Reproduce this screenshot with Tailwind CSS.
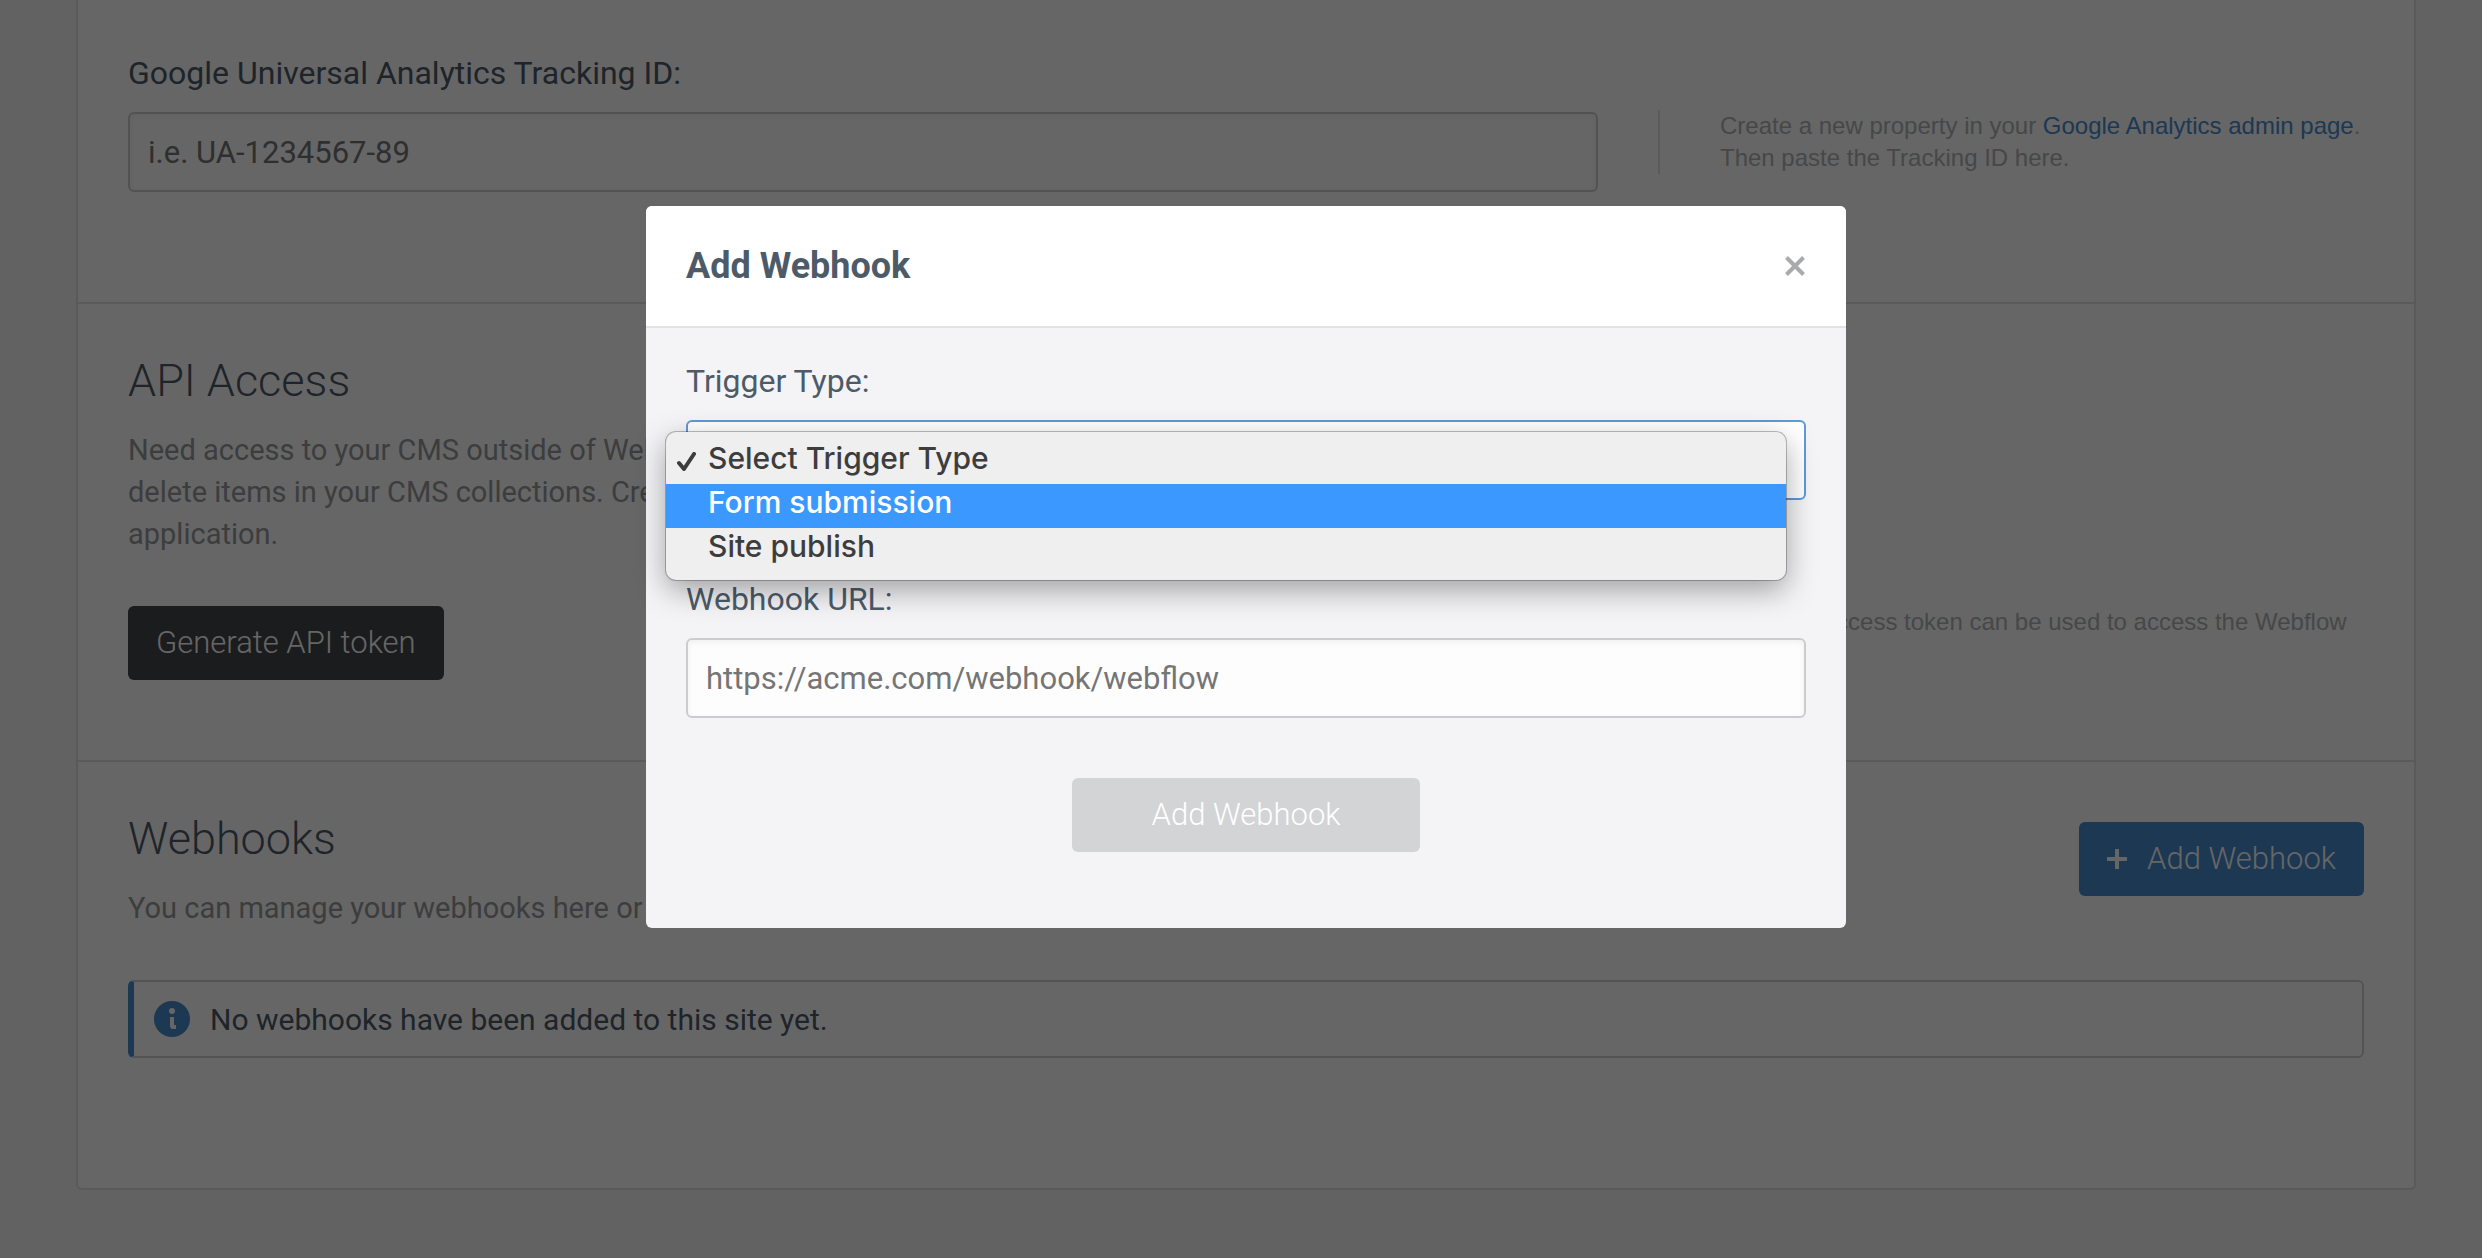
<!DOCTYPE html>
<html lang="en">
<head>
    <meta charset="UTF-8">
    <meta name="viewport" content="width=device-width, initial-scale=1.0">
    <title>Site Settings - Integrations</title>
    <script src="https://cdn.jsdelivr.net/npm/@tailwindcss/browser@4"></script>
</head>
<body class="relative min-h-screen bg-[#f4f4f4] pl-[76px] pr-[66px] pb-16 font-['Roboto',sans-serif] text-[#4d5b69]">

    <main class="rounded-b-md border-2 border-t-0 border-[#e1e1e1] bg-white">

        <!-- Google Analytics -->
        <section class="grid grid-cols-[1fr_706px] gap-x-[60px] border-b-2 border-[#e1e1e1] px-[50px] pt-[54px] pb-[110px]">
            <div>
                <label for="tracking-id" class="mb-5 block text-[32px] leading-[38px]">Google Universal Analytics Tracking ID:</label>
                <input id="tracking-id" type="text" placeholder="i.e. UA-1234567-89"
                       class="block h-20 w-full rounded-md border-2 border-[#cdcdcd] bg-white px-[18px] text-[31px] shadow-[inset_0_2px_6px_rgba(0,0,0,0.06)] placeholder:text-[#757575]">
            </div>
            <aside class="mt-14 self-start border-l-2 border-[#e1e1e1] pl-[60px] font-['Liberation_Sans',sans-serif] text-2xl leading-8 text-[#b0b3b5]">
                Create a new property in your <a href="#" class="text-[#488cd0]">Google Analytics admin page</a>.<br>
                Then paste the Tracking ID here.
            </aside>
        </section>

        <!-- API access -->
        <section class="border-b-2 border-[#e1e1e1] px-[50px] pt-[50px] pb-20">
            <h2 class="text-[45px] leading-[54px] font-light">API Access</h2>
            <p class="mt-[21px] text-[29px] leading-[42px] text-[#979a9b]">
                Need access to your CMS outside of Webflow? Use the Webflow API to create, read, update and<br>
                delete items in your CMS collections. Create an API token to authorize your<br>
                application.
            </p>
            <div class="mt-[51px] grid grid-cols-[1fr_706px] gap-x-[60px]">
                <div>
                    <button type="button" class="h-[74px] rounded-md bg-[#444649] px-7 text-[31px] font-light text-white">Generate API token</button>
                </div>
                <aside class="self-start border-l-2 border-[#e1e1e1] pl-[60px] font-['Liberation_Sans',sans-serif] text-2xl leading-8 text-[#b0b3b5]">
                    Only one access token can be used to access the Webflow<br>
                    API.
                </aside>
            </div>
        </section>

        <!-- Webhooks -->
        <section class="px-[50px] pt-[50px] pb-[130px]">
            <div class="flex items-start justify-between">
                <div>
                    <h2 class="text-[45px] leading-[54px] font-light">Webhooks</h2>
                    <p class="mt-[21px] text-[29px] leading-[42px] text-[#979a9b]">You can manage your webhooks here or via the API.</p>
                </div>
                <button type="button" class="mt-[10px] flex h-[74px] items-center gap-5 rounded-md bg-[#488cd0] px-7 text-[31px] font-light text-white">
                    <svg class="size-5" viewBox="0 0 20 20" fill="currentColor" aria-hidden="true"><path d="M8 0h4v8h8v4h-8v8H8v-8H0V8h8z"/></svg>
                    Add Webhook
                </button>
            </div>
            <div class="mt-[51px] flex h-[78px] items-center gap-5 rounded-md border-2 border-l-6 border-[#d0d0d0] border-l-[#488cd0] px-5 text-[30px]">
                <svg class="size-9" viewBox="0 0 36 36" aria-hidden="true">
                    <circle cx="18" cy="18" r="18" fill="#488cd0"/>
                    <circle cx="18" cy="10" r="3" fill="#fff"/>
                    <path d="M16 16h4v8h2v4h-3a3 3 0 0 1-3-3z" fill="#fff"/>
                </svg>
                <p>No webhooks have been added to this site yet.</p>
            </div>
        </section>
    </main>

    <!-- Modal -->
    <div class="absolute inset-0 flex items-start justify-center bg-black/60 pl-[10px] pt-[206px]">
        <div role="dialog" aria-modal="true" aria-labelledby="modal-title" class="w-[1200px] max-w-full rounded-md bg-[#f4f4f7]">
            <header class="flex h-[122px] items-center justify-between rounded-t-md border-b-2 border-[#e1e1e7] bg-white px-10">
                <h1 id="modal-title" class="text-[36px] font-bold">Add Webhook</h1>
                <button type="button" aria-label="Close" class="text-[#a8aaad]">
                    <svg class="size-[22px]" viewBox="0 0 22 22" fill="none" stroke="currentColor" stroke-width="4" aria-hidden="true"><path d="M2.5 2.5l17 17M19.5 2.5l-17 17"/></svg>
                </button>
            </header>

            <form class="px-10 pt-[34px] pb-[76px]">
                <label for="trigger-type" class="mb-5 block text-[32px] leading-[38px]">Trigger Type:</label>
                <div class="relative mb-20">
                    <select id="trigger-type" class="block h-20 w-full appearance-none rounded-md border-2 border-[#5b9bd8] bg-white px-[18px] text-[31px]">
                        <option>Select Trigger Type</option>
                        <option>Form submission</option>
                        <option>Site publish</option>
                    </select>

                    <!-- Open option list -->
                    <ul role="listbox" aria-label="Trigger Type" class="absolute -left-5 right-5 top-3 rounded-[10px] bg-[#efefef] py-2 font-['Inter',sans-serif] text-[30px] leading-9 font-medium text-[#3d3d3d] shadow-[0_0_0_1px_rgba(0,0,0,0.25),0_10px_30px_rgba(0,0,0,0.35)]">
                        <li role="option" aria-selected="true" class="flex h-11 items-start pl-[11px]">
                            <svg class="mr-3 mt-3 size-[19px]" viewBox="0 0 19 19" fill="none" stroke="currentColor" stroke-width="4" stroke-linecap="round" stroke-linejoin="round" aria-hidden="true"><path d="M2 11l5 6L17 2"/></svg>
                            Select Trigger Type
                        </li>
                        <li role="option" aria-selected="false" class="h-11 bg-[#3b98ff] pl-[42px] text-white">Form submission</li>
                        <li role="option" aria-selected="false" class="h-11 pl-[42px]">Site publish</li>
                    </ul>
                </div>

                <label for="webhook-url" class="mb-5 block text-[32px] leading-[38px]">Webhook URL:</label>
                <input id="webhook-url" type="url" placeholder="https://acme.com/webhook/webflow"
                       class="block h-20 w-full rounded-md border-2 border-[#cbccce] bg-[#fdfdfd] px-[18px] text-[31px] shadow-[inset_0_2px_6px_rgba(0,0,0,0.06)] placeholder:text-[#757575]">

                <button type="submit" disabled class="mx-auto mt-[60px] block h-[74px] rounded-md bg-[#d3d4d6] px-20 text-[31px] font-light text-white">Add Webhook</button>
            </form>
        </div>
    </div>

</body>
</html>
